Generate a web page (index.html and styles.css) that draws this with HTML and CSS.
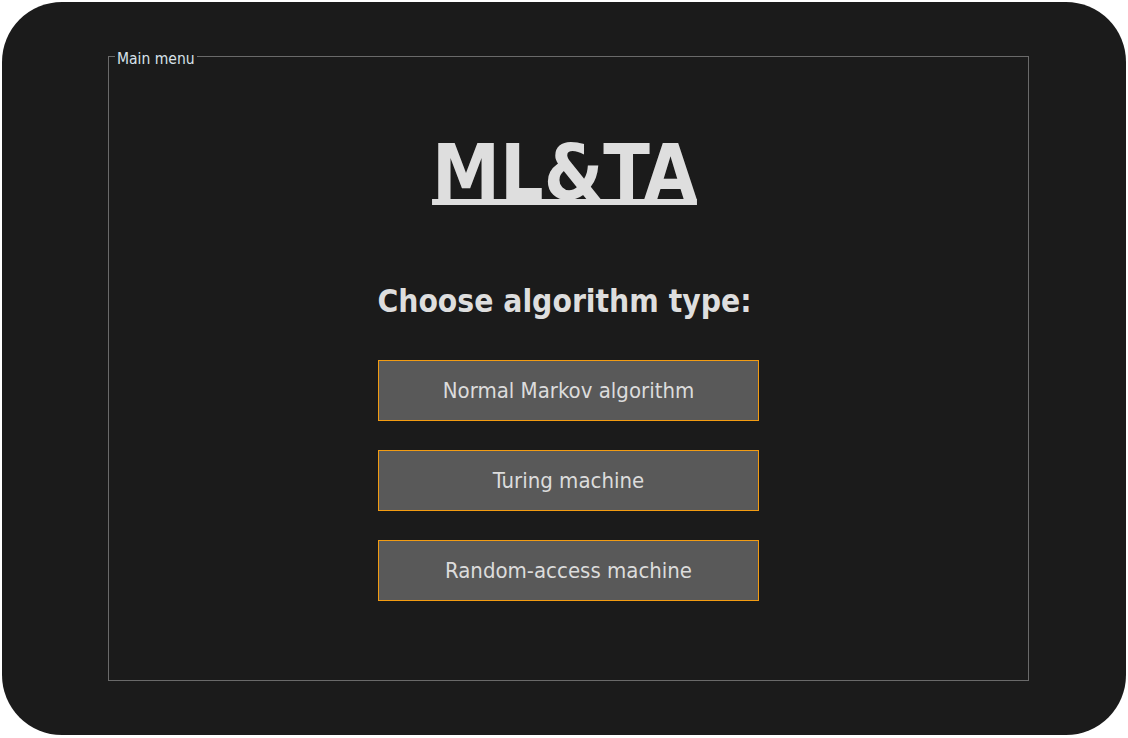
FILE: index.html
```html
<!DOCTYPE html>
<html lang="en">
<head>
<meta charset="utf-8">
<title>ML&amp;TA</title>
<link rel="stylesheet" href="styles.css">
</head>
<body>
<div class="window">
  <div class="frame">
    <span class="legend">Main menu</span>
    <h1 class="title">ML&amp;TA</h1>
    <h2 class="subtitle">Choose algorithm type:</h2>
    <div class="buttons">
      <button class="btn">Normal Markov algorithm</button>
      <button class="btn">Turing machine</button>
      <button class="btn">Random-access machine</button>
    </div>
  </div>
</div>
</body>
</html>
```
FILE: styles.css
```css
html, body {
  margin: 0;
  padding: 0;
  background: #ffffff;
}
body {
  font-family: "DejaVu Sans Condensed", "DejaVu Sans", sans-serif;
}
.window {
  box-sizing: border-box;
  margin: 2px;
  width: 1124px;
  height: 733px;
  border-radius: 60px;
  background: #1b1b1b;
  padding: 54px 0 0 106px;
}
.frame {
  position: relative;
  box-sizing: border-box;
  width: 921px;
  height: 625px;
  border: 1px solid #6a6a6a;
  display: flex;
  flex-direction: column;
  align-items: center;
}
.legend {
  position: absolute;
  top: -6px;
  left: 6px;
  padding: 0 2px;
  background: #1b1b1b;
  color: #d8e2ea;
  font-size: 15.5px;
  line-height: 16px;
}
.title {
  margin: 71px 0 0 -8px;
  font-size: 76px;
  line-height: 90px;
  font-weight: bold;
  color: #dedede;
  text-decoration: underline;
  text-decoration-thickness: 6px;
  text-underline-offset: 0px;
  text-decoration-skip-ink: none;
}
.subtitle {
  margin: 63px 0 0 -8px;
  font-size: 31.5px;
  line-height: 40px;
  font-weight: bold;
  color: #dedede;
}
.buttons {
  margin-top: 39px;
  display: flex;
  flex-direction: column;
  gap: 30px;
}
.btn {
  box-sizing: border-box;
  width: 381px;
  height: 61px;
  background: #595959;
  border: 1px solid #f39c12;
  color: #dcdcdc;
  font-family: "DejaVu Sans Condensed", "DejaVu Sans", sans-serif;
  font-size: 22px;
  padding: 0;
}
.btn + .btn {
  margin-top: -1px;
}
```
